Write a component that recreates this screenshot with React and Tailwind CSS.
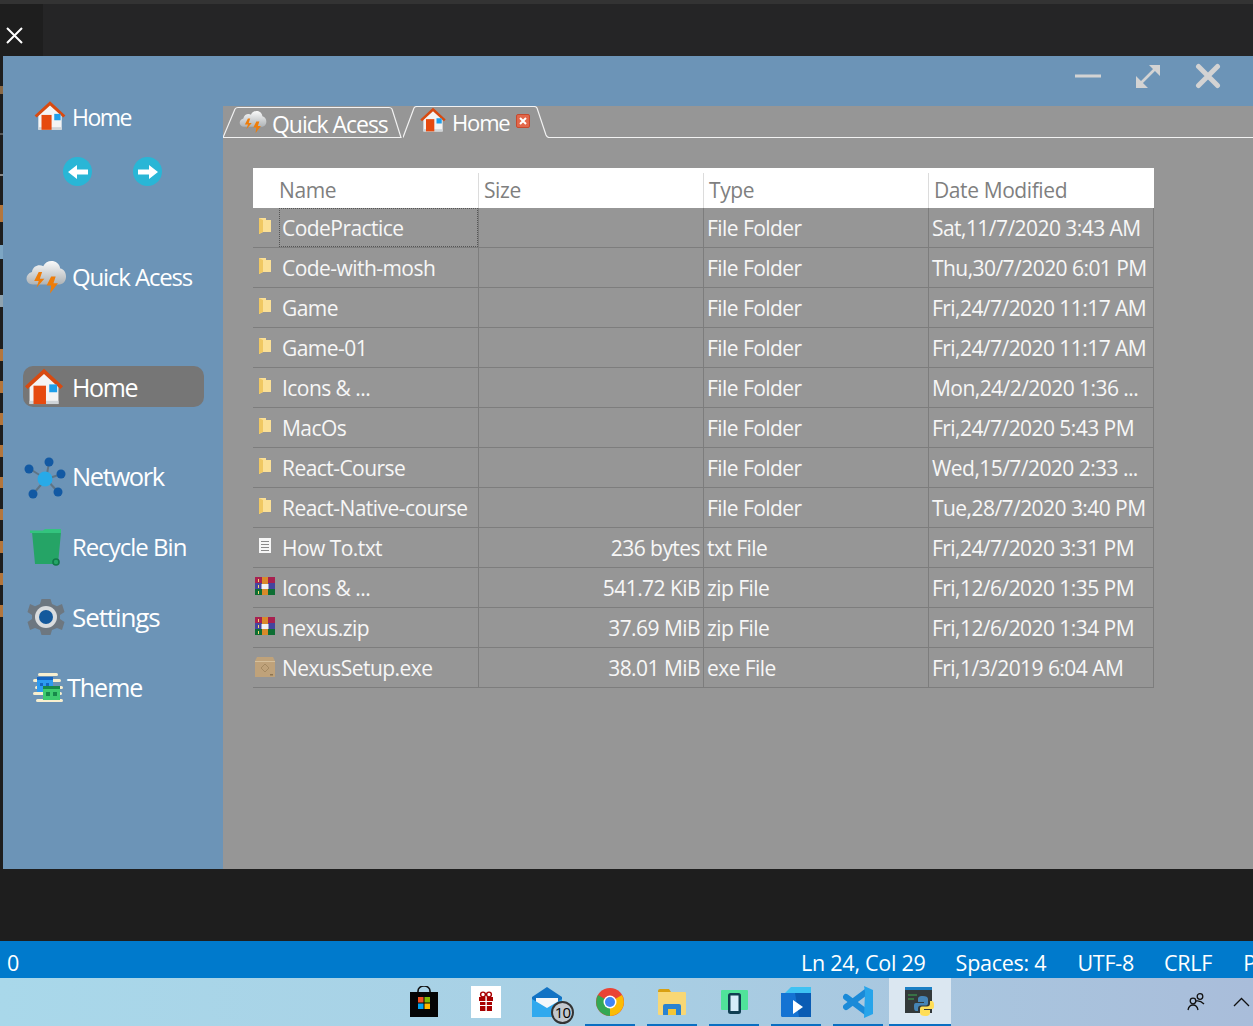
const HomeIcon = ({ s = 32 }) => (
  <svg width={s} height={s} viewBox="0 0 32 32" className="shrink-0">
    <path d="M5 15 L16 5 L27 15 V29 H5 Z" fill="#f4f4f4" />
    <rect x="5" y="26.5" width="22" height="2.5" fill="#cfd4d8" />
    <path d="M1.5 15.5 L16 2 L30.5 15.5 L28.5 17.5 L16 6 L3.5 17.5 Z" fill="#d84a10" />
    <rect x="8" y="15" width="9.5" height="14" fill="#e64a0f" />
    <rect x="20" y="14" width="6" height="6" fill="#1e9fea" />
  </svg>
);
const CloudIcon = ({ s = 38 }) => (
  <svg width={s} height={s} viewBox="0 0 38 38" className="shrink-0">
    <defs>
      <linearGradient id="cg" x1="0" y1="0" x2="0" y2="1">
        <stop offset="0" stopColor="#fafafa" />
        <stop offset="1" stopColor="#aeb3b6" />
      </linearGradient>
    </defs>
    <path d="M8 26 C1 26 0 17 7 15 C8 9 14 8 17 10 C20 3 31 4 32 12 C39 13 39 26 31 26 Z" fill="url(#cg)" />
    <path d="M13 15 L9 23 H13 L11 29 L18 21 H14 L16 15 Z" fill="#ee7d0a" />
    <path d="M24 19 L20 27 H24 L23 34 L30 25 H26 L28 19 Z" fill="#ee7d0a" />
  </svg>
);
const NetworkIcon = () => (
  <svg width="44" height="44" viewBox="0 0 44 44" className="shrink-0">
    <g stroke="#5f7484" strokeWidth="2">
      <line x1="22" y1="22" x2="6" y2="12" /><line x1="22" y1="22" x2="25" y2="6" />
      <line x1="22" y1="22" x2="38" y2="17" /><line x1="22" y1="22" x2="9" y2="37" />
      <line x1="22" y1="22" x2="34" y2="35" />
    </g>
    <g fill="#1259a3">
      <circle cx="5" cy="12" r="4.5" /><circle cx="25" cy="5" r="4.5" /><circle cx="37" cy="17" r="4.5" />
      <circle cx="9" cy="37" r="4.5" /><circle cx="34" cy="35" r="4.5" />
    </g>
    <circle cx="21" cy="22" r="7.5" fill="#27aae8" />
  </svg>
);
const BinIcon = () => (
  <svg width="34" height="40" viewBox="0 0 34 40" className="shrink-0">
    <path d="M3 5 H32 L29 37 H6 Z" fill="#25a466" />
    <path d="M1 3.5 L14 3.5 L16 2 H32 V6 H1 Z" fill="#33c47e" />
    <circle cx="27" cy="35" r="3" fill="#25a466" stroke="#107a48" strokeWidth="1.6" />
  </svg>
);
const GearIcon = () => (
  <svg width="38" height="38" viewBox="0 0 38 38" className="shrink-0">
    <path d="M14.5 1 H23.5 L25 6 L30 8.2 L35 6 L37.5 14 L33 17 V21 L37.5 24 L35 32 L30 30 L25 32 L23.5 37 H14.5 L13 32 L8 30 L3 32 L0.5 24 L5 21 V17 L0.5 14 L3 6 L8 8.2 L13 6 Z" fill="#6d7780" />
    <circle cx="19" cy="19" r="11" fill="#d9dcde" />
    <circle cx="19" cy="19" r="7" fill="#14599c" />
  </svg>
);
const ThemeIcon = () => (
  <svg width="30" height="30" viewBox="0 0 30 30" className="shrink-0">
    <g fill="#f8efcf">
      <rect x="5" y="0" width="20" height="3" rx="1.5" /><rect x="0" y="6" width="28" height="3" rx="1.5" />
      <rect x="2" y="13" width="28" height="3" rx="1.5" /><rect x="0" y="19" width="29" height="3" rx="1.5" />
      <rect x="3" y="26" width="27" height="3" rx="1.5" />
    </g>
    <rect x="4" y="4" width="16" height="15" fill="#2d9bf0" />
    <rect x="4" y="4" width="16" height="3" fill="#1565c0" />
    <rect x="7" y="10" width="3" height="3" fill="#1565c0" /><rect x="13" y="10" width="3" height="3" fill="#1565c0" />
    <rect x="10" y="13" width="17" height="14" fill="#3ecb6f" />
    <rect x="10" y="13" width="17" height="3" fill="#17894a" />
    <rect x="13" y="19" width="4" height="4" fill="#17894a" /><rect x="20" y="19" width="4" height="4" fill="#17894a" />
  </svg>
);
const FolderIcon = () => (
  <svg width="14" height="18" viewBox="0 0 14 18" className="shrink-0">
    <path d="M1 1 H8 V3 H13 V15 H5 L1 17 Z" fill="#fbe096" />
    <path d="M1 1 L5 3 V15 L1 17 Z" fill="#f0c862" />
  </svg>
);
const DocIcon = () => (
  <svg width="14" height="18" viewBox="0 0 14 18" className="shrink-0">
    <rect x="1" y="1" width="12" height="15" fill="#f6f6f6" />
    <g stroke="#8a8a8a" strokeWidth="1">
      <line x1="3" y1="4.5" x2="11" y2="4.5" /><line x1="3" y1="7.5" x2="11" y2="7.5" />
      <line x1="3" y1="10.5" x2="11" y2="10.5" /><line x1="3" y1="13.5" x2="11" y2="13.5" />
    </g>
  </svg>
);
const RarIcon = () => (
  <svg width="20" height="18" viewBox="0 0 20 18" className="shrink-0">
    <rect x="0" y="0" width="20" height="6" fill="#a8204f" />
    <rect x="0" y="6" width="20" height="6" fill="#44449e" />
    <rect x="0" y="12" width="20" height="6" fill="#0d6e33" />
    <rect x="7" y="0" width="6" height="18" fill="#d98a2b" />
    <rect x="6.5" y="7" width="7" height="5" fill="#f2f2f2" />
    <rect x="3" y="2" width="1" height="3" fill="#f5d76e" />
    <rect x="3" y="8" width="1" height="3" fill="#f5d76e" />
    <rect x="3" y="14" width="1" height="3" fill="#f5d76e" />
  </svg>
);
const BoxIcon = () => (
  <svg width="20" height="20" viewBox="0 0 20 20" className="shrink-0">
    <path d="M2 0 H18 L20 4 V20 H0 V4 Z" fill="#bfa27a" />
    <rect x="0" y="4" width="20" height="1" fill="#d6c09c" />
    <path d="M10 7 L14 11 L10 15 L6 11 Z" fill="none" stroke="#a58a63" strokeWidth="1" />
    <rect x="15" y="17" width="3" height="1.5" fill="#8e7550" />
  </svg>
);

const rows = [
  ["f", "CodePractice", "", "File Folder", "Sat,11/7/2020 3:43 AM"],
  ["f", "Code-with-mosh", "", "File Folder", "Thu,30/7/2020 6:01 PM"],
  ["f", "Game", "", "File Folder", "Fri,24/7/2020 11:17 AM"],
  ["f", "Game-01", "", "File Folder", "Fri,24/7/2020 11:17 AM"],
  ["f", "Icons & ...", "", "File Folder", "Mon,24/2/2020 1:36 ..."],
  ["f", "MacOs", "", "File Folder", "Fri,24/7/2020 5:43 PM"],
  ["f", "React-Course", "", "File Folder", "Wed,15/7/2020 2:33 ..."],
  ["f", "React-Native-course", "", "File Folder", "Tue,28/7/2020 3:40 PM"],
  ["d", "How To.txt", "236 bytes", "txt File", "Fri,24/7/2020 3:31 PM"],
  ["r", "Icons & ...", "541.72 KiB", "zip File", "Fri,12/6/2020 1:35 PM"],
  ["r", "nexus.zip", "37.69 MiB", "zip File", "Fri,12/6/2020 1:34 PM"],
  ["b", "NexusSetup.exe", "38.01 MiB", "exe File", "Fri,1/3/2019 6:04 AM"],
];

const FileIcon = ({ k }) => {
  if (k === "f") return <span className="w-5 flex justify-center -translate-y-[3px]"><FolderIcon /></span>;
  if (k === "d") return <span className="w-5 flex justify-center -translate-y-[3px]"><DocIcon /></span>;
  if (k === "r") return <span className="w-5 flex justify-center -translate-y-[3px]"><RarIcon /></span>;
  return <span className="w-5 flex justify-center -translate-y-[2px]"><BoxIcon /></span>;
};

const SideRow = ({ icon, label, cls = "", pl = "pl-[69px]", size = "text-[24px]", track = "tracking-[-1px]", lift = "-translate-y-[1px]" }) => (
  <div className={`relative h-10 flex items-center text-white ${size} ${cls}`}>
    <span className={`${pl} leading-none ${track} ${lift}`}>{label}</span>
    {icon}
  </div>
);

const Arrow = ({ dir }) => (
  <div className="w-[29px] h-[29px] rounded-full bg-[#29b6d6] flex items-center justify-center">
    <svg width="20" height="14" viewBox="0 0 20 14" className={dir === "l" ? "" : "rotate-180"}>
      <path d="M0 7 L9 0 V4.5 H20 V9.5 H9 V14 Z" fill="#fff" />
    </svg>
  </div>
);

const TaskSlot = ({ children, line, active }) => (
  <div className={`relative w-[62px] h-full flex items-center justify-center ${active ? "bg-[#dbe7f1]" : ""}`}>
    {children}
    {line && <div className={`absolute bottom-0 h-[2px] bg-[#0a6fc2] ${active ? "inset-x-0" : "inset-x-[6px]"}`} />}
  </div>
);

export default function App() {
  return (
    <div className="w-[1253px] h-[1026px] overflow-hidden flex flex-col bg-[#1e1e1e] font-['Open_Sans','Noto_Sans',sans-serif]">
      <div className="h-1 bg-[#333333] shrink-0" />
      <div className="h-[52px] shrink-0 bg-[#252526] flex">
        <div className="w-[43px] bg-[#1e1e1e] flex items-end pb-[12px] pl-[6px]">
          <svg width="17" height="17" viewBox="0 0 17 17"><path d="M1 1 L16 16 M16 1 L1 16" stroke="#fff" strokeWidth="2" /></svg>
        </div>
      </div>

      <div className="h-[813px] shrink-0 flex">
        <div className="w-[3px] shrink-0 bg-[#1e1e1e] flex flex-col">
          <div className="mt-[30px] h-[8px] bg-[#8a6a48]" />
          <div className="mt-[39px] h-[2px] bg-[#5a5a5a]" />
          <div className="mt-[39px] h-[2px] bg-[#8a8a8a]" />
          <div className="mt-[29px] h-[17px] bg-[#b4763c]" />
          <div className="mt-[23px] h-[14px] bg-[#7da6c4]" />
          <div className="mt-[36px] h-[12px] bg-[#8fa3b0]" />
          <div className="mt-[42px] h-[12px] bg-[#b4763c]" />
          <div className="mt-[20px] h-[12px] bg-[#b4763c]" />
          <div className="mt-[20px] h-[12px] bg-[#b4763c]" />
          <div className="mt-[20px] h-[12px] bg-[#b4763c]" />
          <div className="mt-[20px] h-[11px] bg-[#b4763c]" />
          <div className="mt-[21px] h-[11px] bg-[#b4763c]" />
          <div className="mt-[21px] h-[12px] bg-[#b4763c]" />
          <div className="mt-[20px] h-[12px] bg-[#b4763c]" />
          <div className="mt-[20px] h-[12px] bg-[#b4763c]" />
        </div>
        <div className="w-[220px] shrink-0 bg-[#6c94b7] flex flex-col pt-[41px]">
          <SideRow label="Home" size="text-[23px]" track="tracking-[-1.5px]" lift="" icon={<span className="absolute left-[30px] top-[2px]"><HomeIcon s={34} /></span>} />
          <div className="flex gap-[41px] mt-5 ml-[60px]">
            <Arrow dir="l" />
            <Arrow dir="r" />
          </div>
          <SideRow cls="mt-[72px]" track="tracking-[-1.15px]" label="Quick Acess" icon={<span className="absolute left-[21px] top-[-3px]"><CloudIcon s={43} /></span>} />
          <div className="relative mt-[68px] ml-[20px] w-[181px] h-[41px] rounded-[10px] bg-[#767676] flex items-center text-white text-[25px]">
            <span className="pl-[49px] leading-none tracking-[-1.4px] translate-y-[1px]">Home</span>
            <span className="absolute left-0 top-0"><HomeIcon s={42} /></span>
          </div>
          <SideRow cls="mt-[51px]" size="text-[25.5px]" track="tracking-[-1.4px]" label="Network" icon={<span className="absolute left-[21px] top-[-1px]"><NetworkIcon /></span>} />
          <SideRow cls="mt-[30px]" label="Recycle Bin" icon={<span className="absolute left-[26px] top-[-1px]"><BinIcon /></span>} />
          <SideRow cls="mt-[30px]" size="text-[26px]" track="tracking-[-1.1px]" label="Settings" icon={<span className="absolute left-[24px] top-0"><GearIcon /></span>} />
          <SideRow cls="mt-[30px]" pl="pl-[64px]" size="text-[25px]" track="tracking-[-1px]" label="Theme" icon={<span className="absolute left-[30px] top-[5px]"><ThemeIcon /></span>} />
        </div>

        <div className="flex-1 min-w-0 flex flex-col">
          <div className="h-[50px] shrink-0 bg-[#6c94b7] flex items-center justify-end pb-[10px] pr-[32px] gap-[34px]">
            <svg width="26" height="4" viewBox="0 0 26 4"><rect width="26" height="3" y="0.5" fill="#d3d3d3" /></svg>
            <svg width="26" height="26" viewBox="0 0 26 26">
              <path d="M4 22 L22 4" stroke="#d3d3d3" strokeWidth="2.6" />
              <path d="M14 2 H25 V13 Z M1 13 V25 H13 Z" fill="#d3d3d3" />
            </svg>
            <svg width="26" height="26" viewBox="0 0 26 26"><path d="M3.5 3.5 L22.5 22.5 M22.5 3.5 L3.5 22.5" stroke="#d3d3d3" strokeWidth="5" strokeLinecap="round" /></svg>
          </div>

          <div className="flex-1 bg-[#969696] flex flex-col">
            <div className="h-8 shrink-0 flex text-white">
              <div className="relative w-[180px] shrink-0 flex items-center">
                <svg className="absolute inset-0" width="180" height="32" viewBox="0 0 180 32">
                  <path d="M0 31.5 L12 3 Q13 1.5 15 1.5 H166 Q168 1.5 169 3 L178 31.5 Z" fill="none" stroke="#f2f2f2" strokeWidth="1.2" />
                </svg>
                <span className="absolute left-[15px] top-[1px]"><CloudIcon s={29} /></span>
                <span className="relative pl-[49px] text-[23px] leading-none tracking-[-1.05px] translate-y-[2px]">Quick Acess</span>
              </div>
              <div className="relative flex-1 min-w-0 flex items-center">
                <svg className="absolute inset-0" width="850" height="32" viewBox="0 0 850 32">
                  <path d="M0 31.5 L11 2 Q12 0.5 14 0.5 H131 Q133 0.5 134 2 L143 29 Q144 31.5 146 31.5 H850" fill="none" stroke="#f2f2f2" strokeWidth="1.2" />
                </svg>
                <span className="absolute left-[16px] top-0"><HomeIcon s={28} /></span>
                <span className="relative pl-[49px] text-[22px] leading-none tracking-[-1.15px]">Home</span>
                <span className="relative ml-[6px] w-[14px] h-[14px] rounded-[2px] bg-[#e2674a] border border-[#c7492d] flex items-center justify-center -translate-y-[1px]">
                  <svg width="8" height="8" viewBox="0 0 8 8"><path d="M1 1 L7 7 M7 1 L1 7" stroke="#fff" strokeWidth="2" /></svg>
                </span>
              </div>
            </div>

            <div className="ml-[30px] mt-[30px] w-[901px]">
              <div className="grid grid-cols-[226px_225px_225px_225px] h-10 pt-[5px] bg-white text-[#7f7f7f] text-[21px] tracking-[-0.4px]">
                <div className="border-r border-[#dcdcdc] pl-[26px] flex items-center">Name</div>
                <div className="border-r border-[#dcdcdc] pl-[5px] flex items-center">Size</div>
                <div className="border-r border-[#dcdcdc] pl-[5px] flex items-center">Type</div>
                <div className="pl-[5px] flex items-center">Date Modified</div>
              </div>
              {rows.map((r, i) => (
                <div key={i} className="grid grid-cols-[226px_225px_225px_225px] h-10 border-b border-[#7d7d7d] text-[#f7f7f7] text-[21px] tracking-[-0.55px] whitespace-nowrap">
                  <div className="relative border-r border-[#7d7d7d] flex items-center pl-[2px] pt-[2px]">
                    <FileIcon k={r[0]} />
                    <span className="pl-[7px]">{r[1]}</span>
                    {i === 0 && <div className="absolute left-[26px] right-0 top-0 bottom-0 border border-dotted border-[#555555]" />}
                  </div>
                  <div className="border-r border-[#7d7d7d] flex items-center justify-end pr-[3px] pt-[2px]">{r[2]}</div>
                  <div className="border-r border-[#7d7d7d] flex items-center pl-[3px] pt-[2px]">{r[3]}</div>
                  <div className="border-r border-[#7d7d7d] flex items-center pl-[3px] pt-[2px]">{r[4]}</div>
                </div>
              ))}
            </div>
          </div>
        </div>
      </div>

      <div className="h-[72px] shrink-0 bg-[#1e1e1e]" />

      <div className="h-[37px] shrink-0 bg-[#007acc] flex items-center pt-[7px] text-white text-[21.5px] tracking-[-0.25px] whitespace-nowrap pl-[7px]">
        <span>0</span>
        <span className="ml-[782px]">Ln 24, Col 29</span>
        <span className="ml-[30px]">Spaces: 4</span>
        <span className="ml-[31px]">UTF-8</span>
        <span className="ml-[30px]">CRLF</span>
        <span className="ml-[31px]">P</span>
      </div>

      <div className="h-[48px] shrink-0 bg-gradient-to-r from-[#a9d8ea] via-[#a8cfe4] to-[#a9bdda] flex items-stretch pl-[393px] text-black">
        <TaskSlot>
          <svg width="30" height="32" viewBox="0 0 30 32">
            <path d="M9 8 V5 A6 5 0 0 1 21 5 V8" fill="none" stroke="#111" strokeWidth="1.6" />
            <rect x="1" y="6" width="28" height="25" fill="#050505" />
            <rect x="9" y="11" width="5.5" height="5.5" fill="#f25022" /><rect x="15.5" y="11" width="5.5" height="5.5" fill="#7fba00" />
            <rect x="9" y="17.5" width="5.5" height="5.5" fill="#00a4ef" /><rect x="15.5" y="17.5" width="5.5" height="5.5" fill="#ffb900" />
          </svg>
        </TaskSlot>
        <TaskSlot>
          <svg width="30" height="32" viewBox="0 0 30 32">
            <rect width="30" height="32" fill="#fff" />
            <rect x="8" y="11" width="14" height="4" fill="#a80000" /><rect x="9" y="16" width="12" height="9" fill="#a80000" />
            <rect x="14.4" y="11" width="1.4" height="14" fill="#fff" /><rect x="9" y="19" width="12" height="1" fill="#fff" />
            <circle cx="12" cy="8.5" r="2.4" fill="none" stroke="#a80000" strokeWidth="1.4" /><circle cx="18" cy="8.5" r="2.4" fill="none" stroke="#a80000" strokeWidth="1.4" />
          </svg>
        </TaskSlot>
        <TaskSlot>
          <div className="relative w-[30px] h-[30px] -translate-x-[1px]">
            <svg width="30" height="30" viewBox="0 0 30 30">
              <path d="M0 10 L15 0 L30 10 V30 H0 Z" fill="#1273c4" />
              <path d="M4 11 H26 V17 L15 22 L4 17 Z" fill="#f4f7fa" />
              <path d="M0 12 L15 21 L30 12 V30 H0 Z" fill="#30a9ee" />
            </svg>
            <div className="absolute left-[19px] top-[14px] w-[23px] h-[23px] rounded-full bg-[#c2c8ce] border-2 border-[#333333] flex items-center justify-center text-[15px] leading-none tracking-[-0.8px]">10</div>
          </div>
        </TaskSlot>
        <TaskSlot line>
          <svg width="28" height="28" viewBox="0 0 28 28">
            <circle cx="14" cy="14" r="14" fill="#ea4335" />
            <path d="M14 14 L26 7 A14 14 0 0 1 14 28 Z" fill="#fbbc05" />
            <path d="M14 14 L14 28 A14 14 0 0 1 2 7 Z" fill="#34a853" />
            <circle cx="14" cy="14" r="6.5" fill="#fff" /><circle cx="14" cy="14" r="5" fill="#4285f4" />
          </svg>
        </TaskSlot>
        <TaskSlot line>
          <svg width="28" height="26" viewBox="0 0 28 26">
            <path d="M0 2 Q0 0 2 0 H11 L13 3 H0 Z" fill="#d9a011" />
            <rect x="0" y="3" width="28" height="23" rx="1" fill="#f8d775" />
            <path d="M5 26 V17 Q5 15 7 15 H21 Q23 15 23 17 V26 H18 V20 H10 V26 Z" fill="#2a83d1" />
            <rect x="10" y="20" width="8" height="6" fill="#f3c636" />
          </svg>
        </TaskSlot>
        <TaskSlot line>
          <svg width="27" height="24" viewBox="0 0 27 24">
            <rect x="0" y="0" width="27" height="20" rx="1" fill="#50e39a" />
            <rect x="7" y="3" width="13" height="21" rx="2.5" fill="#103e52" />
            <rect x="9.5" y="5.5" width="8" height="15.5" fill="#d6ecfa" />
          </svg>
        </TaskSlot>
        <TaskSlot line>
          <svg width="30" height="30" viewBox="0 0 30 30">
            <path d="M10 0 H30 V6 H4 Z" fill="#3ec2f3" />
            <path d="M0 6 H30 V30 H2 Q0 30 0 28 Z" fill="#0a5cb4" />
            <path d="M0 6 H14 L18 30 H2 Q0 30 0 28 Z" fill="#1473d3" />
            <path d="M12 13 L22 20 L12 27 Z" fill="#fff" />
          </svg>
        </TaskSlot>
        <TaskSlot line>
          <svg width="30" height="32" viewBox="0 0 30 32">
            <g stroke="#1a8ad8" strokeWidth="6" strokeLinecap="round">
              <line x1="3" y1="11" x2="23" y2="26" />
              <line x1="3" y1="21" x2="23" y2="6" />
            </g>
            <path d="M21 0 L30 4 V28 L21 32 L22 6 Z" fill="#27a4ea" />
          </svg>
        </TaskSlot>
        <TaskSlot line active>
          <svg width="30" height="30" viewBox="0 0 30 30">
            <rect x="0" y="0" width="27" height="26" fill="#33393a" />
            <rect x="0" y="0" width="27" height="3" fill="#1c7fc4" />
            <g stroke="#3c9a4e" strokeWidth="1.2"><line x1="3" y1="8" x2="12" y2="8" /><line x1="3" y1="12" x2="9" y2="12" /></g>
            <path d="M18 9 C13 9 13 11 13 13 V15 H19 V16 H11 C9 16 9 17.5 9 20 C9 23 10 24 11 24 H13 V21.5 C13 19.5 14 18.5 16 18.5 H21 C22.5 18.5 23 17.5 23 16 V12 C23 10 21 9 18 9 Z" fill="#4584b6" />
            <path d="M20 29 C25 29 25 27 25 25 V23 H19 V22 H27 C29 22 29 20.5 29 18 C29 15 28 14 27 14 H25 V16.5 C25 18.5 24 19.5 22 19.5 H17 C15.5 19.5 15 20.5 15 22 V26 C15 28 17 29 20 29 Z" fill="#ffde57" />
          </svg>
        </TaskSlot>
        <div className="flex-1 flex items-center justify-end pr-[3px] gap-[28px]">
          <svg width="18" height="18" viewBox="0 0 18 18" fill="none" stroke="#111" strokeWidth="1.3">
            <circle cx="6" cy="8" r="2.8" /><path d="M1 17 Q2 12 6 12 Q10 12 11 17" />
            <circle cx="13" cy="3.5" r="2.8" /><path d="M9 8 Q13 7 17 11" />
          </svg>
          <svg width="17" height="10" viewBox="0 0 17 10" fill="none" stroke="#111" strokeWidth="1.3"><path d="M1 9 L8.5 1.5 L16 9" /></svg>
        </div>
      </div>
    </div>
  );
}
